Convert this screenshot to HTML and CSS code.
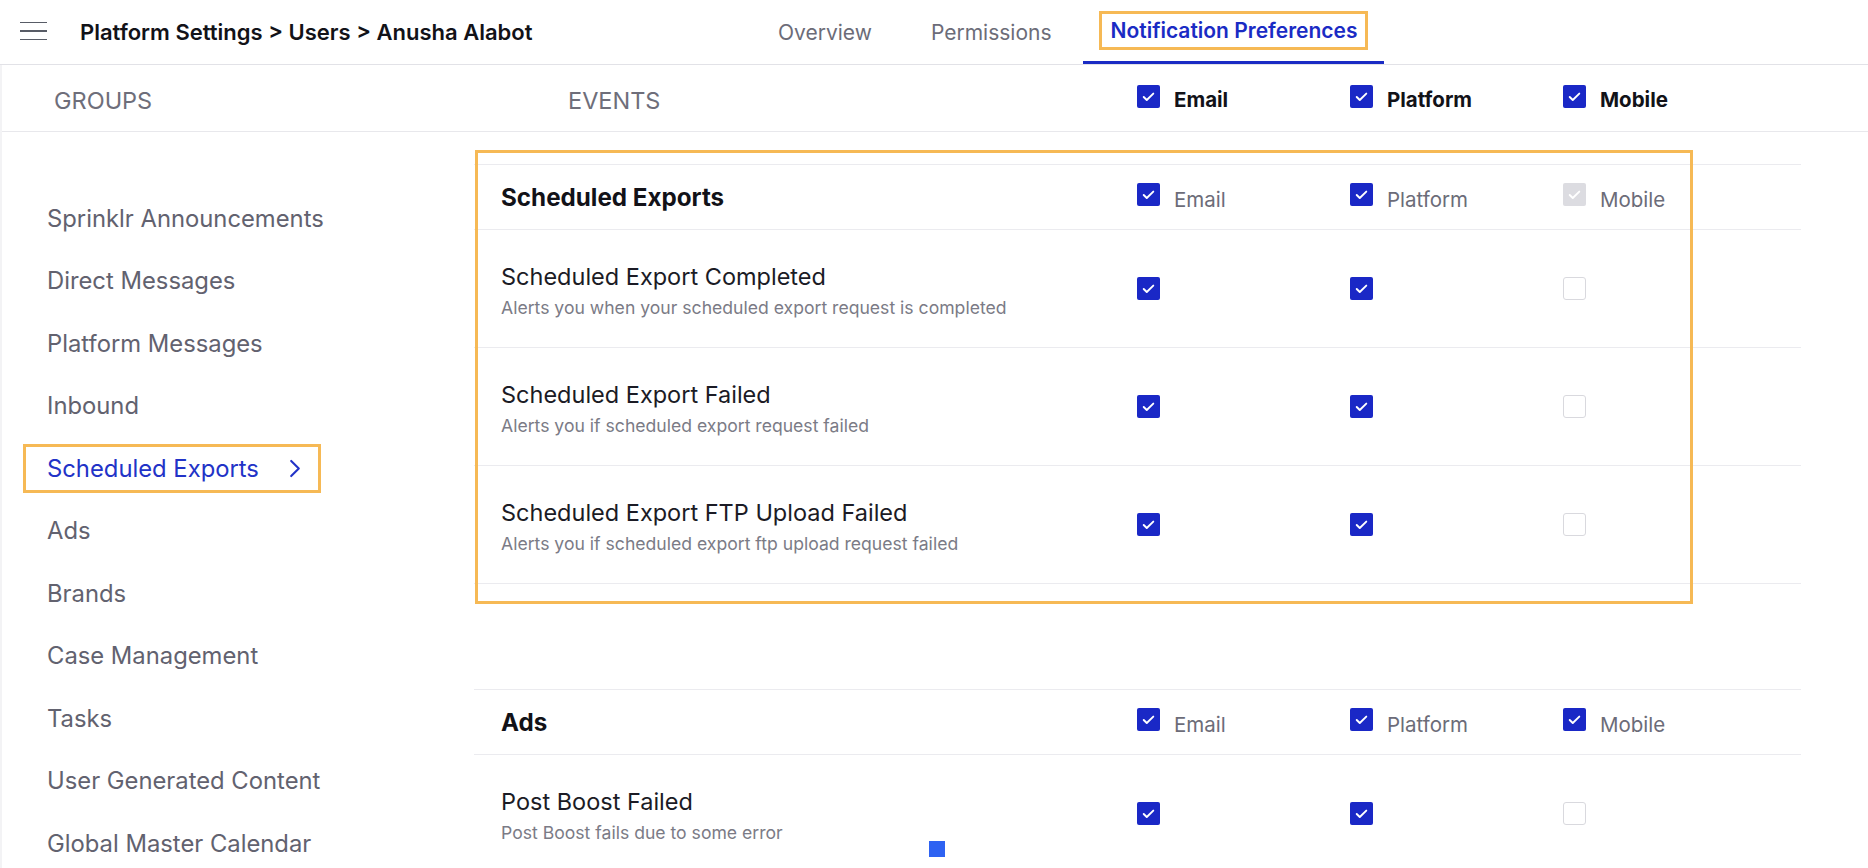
FILE: index.html
```html
<!DOCTYPE html>
<html lang="en">
<head>
<meta charset="utf-8">
<title>Notification Preferences</title>
<link rel="stylesheet" href="styles.css">
</head>
<body>
<header class="topbar">
  <div class="topbar-left">
    <div class="burger"><span></span><span></span><span></span></div>
    <div class="crumbs">Platform Settings &gt; Users &gt; Anusha Alabot</div>
  </div>
  <nav class="tabs">
    <div class="tab">Overview</div>
    <div class="tab">Permissions</div>
    <div class="tab active"><span class="tab-hl">Notification Preferences</span></div>
  </nav>
</header>

<div class="below">
  <div class="colhead">
    <div class="ch-groups">GROUPS</div>
    <div class="ch-events">EVENTS</div>
    <div class="ch-col"><span class="cb on"><svg viewBox="0 0 24 24"><path d="M7 12.5l3.2 3.2L17 9"/></svg></span><span class="lbl">Email</span></div>
    <div class="ch-col"><span class="cb on"><svg viewBox="0 0 24 24"><path d="M7 12.5l3.2 3.2L17 9"/></svg></span><span class="lbl">Platform</span></div>
    <div class="ch-col"><span class="cb on"><svg viewBox="0 0 24 24"><path d="M7 12.5l3.2 3.2L17 9"/></svg></span><span class="lbl">Mobile</span></div>
  </div>

  <div class="layout">
    <aside class="sidebar">
      <div class="item">Sprinklr Announcements</div>
      <div class="item">Direct Messages</div>
      <div class="item">Platform Messages</div>
      <div class="item">Inbound</div>
      <div class="item active"><div class="item-box"><span>Scheduled Exports</span><svg class="chev" viewBox="0 0 12 20"><path d="M2 2l8 8-8 8"/></svg></div></div>
      <div class="item">Ads</div>
      <div class="item">Brands</div>
      <div class="item">Case Management</div>
      <div class="item">Tasks</div>
      <div class="item">User Generated Content</div>
      <div class="item">Global Master Calendar</div>
    </aside>

    <main class="main">
      <section class="section">
        <div class="annot"></div>
        <div class="sec-head">
          <div class="sec-title">Scheduled Exports</div>
          <div class="sec-col"><span class="cb on"><svg viewBox="0 0 24 24"><path d="M7 12.5l3.2 3.2L17 9"/></svg></span><span class="lbl">Email</span></div>
          <div class="sec-col"><span class="cb on"><svg viewBox="0 0 24 24"><path d="M7 12.5l3.2 3.2L17 9"/></svg></span><span class="lbl">Platform</span></div>
          <div class="sec-col"><span class="cb dis"><svg viewBox="0 0 24 24"><path d="M7 12.5l3.2 3.2L17 9"/></svg></span><span class="lbl">Mobile</span></div>
        </div>
        <div class="row">
          <div class="ev"><div class="ev-title">Scheduled Export Completed</div><div class="ev-sub">Alerts you when your scheduled export request is completed</div></div>
          <div class="cell"><span class="cb on"><svg viewBox="0 0 24 24"><path d="M7 12.5l3.2 3.2L17 9"/></svg></span></div>
          <div class="cell"><span class="cb on"><svg viewBox="0 0 24 24"><path d="M7 12.5l3.2 3.2L17 9"/></svg></span></div>
          <div class="cell"><span class="cb off"></span></div>
        </div>
        <div class="row">
          <div class="ev"><div class="ev-title">Scheduled Export Failed</div><div class="ev-sub">Alerts you if scheduled export request failed</div></div>
          <div class="cell"><span class="cb on"><svg viewBox="0 0 24 24"><path d="M7 12.5l3.2 3.2L17 9"/></svg></span></div>
          <div class="cell"><span class="cb on"><svg viewBox="0 0 24 24"><path d="M7 12.5l3.2 3.2L17 9"/></svg></span></div>
          <div class="cell"><span class="cb off"></span></div>
        </div>
        <div class="row">
          <div class="ev"><div class="ev-title">Scheduled Export FTP Upload Failed</div><div class="ev-sub">Alerts you if scheduled export ftp upload request failed</div></div>
          <div class="cell"><span class="cb on"><svg viewBox="0 0 24 24"><path d="M7 12.5l3.2 3.2L17 9"/></svg></span></div>
          <div class="cell"><span class="cb on"><svg viewBox="0 0 24 24"><path d="M7 12.5l3.2 3.2L17 9"/></svg></span></div>
          <div class="cell"><span class="cb off"></span></div>
        </div>
      </section>

      <section class="section second">
        <div class="sec-head">
          <div class="sec-title">Ads</div>
          <div class="sec-col"><span class="cb on"><svg viewBox="0 0 24 24"><path d="M7 12.5l3.2 3.2L17 9"/></svg></span><span class="lbl">Email</span></div>
          <div class="sec-col"><span class="cb on"><svg viewBox="0 0 24 24"><path d="M7 12.5l3.2 3.2L17 9"/></svg></span><span class="lbl">Platform</span></div>
          <div class="sec-col"><span class="cb on"><svg viewBox="0 0 24 24"><path d="M7 12.5l3.2 3.2L17 9"/></svg></span><span class="lbl">Mobile</span></div>
        </div>
        <div class="row">
          <div class="ev"><div class="ev-title">Post Boost Failed</div><div class="ev-sub">Post Boost fails due to some error</div></div>
          <div class="cell"><span class="cb on"><svg viewBox="0 0 24 24"><path d="M7 12.5l3.2 3.2L17 9"/></svg></span></div>
          <div class="cell"><span class="cb on"><svg viewBox="0 0 24 24"><path d="M7 12.5l3.2 3.2L17 9"/></svg></span></div>
          <div class="cell"><span class="cb off"></span></div>
        </div>
      </section>
    </main>
  </div>
</div>
<div class="cursor-dot"></div>
</body>
</html>
```

FILE: styles.css
```css
html, body {
  margin: 0;
  padding: 0;
  background: #ffffff;
  font-family: Inter, "Noto Sans", "Liberation Sans", sans-serif;
  color: #1b1b25;
  overflow: hidden;
  height: 868px;
}

.topbar {
  display: flex;
  align-items: stretch;
  height: 64px;
  border-bottom: 1px solid #e2e2e7;
}

.topbar-left {
  width: 751px;
  flex: none;
  display: flex;
  align-items: center;
  padding-left: 20px;
  box-sizing: border-box;
}

.burger {
  width: 27px;
  display: flex;
  flex-direction: column;
  gap: 7px;
  margin-top: -2px;
}
.burger span {
  display: block;
  height: 1.6px;
  background: #585c66;
}

.crumbs {
  margin-left: 33px;
  font-size: 22px;
  font-weight: 600;
  color: #121218;
}

.tabs {
  display: flex;
  gap: 5px;
}
.tab {
  display: flex;
  align-items: center;
  padding: 0 27px;
  font-size: 21px;
  color: #6c6c78;
  box-sizing: border-box;
  height: 64px;
  border-bottom: 3px solid transparent;
  padding-top: 3px;
}
.tab.active {
  padding: 3px 16px 0;
  border-bottom-color: #1a2bc4;
  color: #1a2bc4;
  font-weight: 600;
}
.tab-hl {
  border: 3px solid #f6b955;
  padding: 4px 8px;
  margin-top: -3px;
}

.below {
  border-left: 2px solid #f3f3f5;
}

.colhead {
  display: grid;
  grid-template-columns: 472px 663px 213px 213px 1fr;
  align-items: center;
  height: 66px;
  border-bottom: 1px solid #e8e8ec;
}
.ch-groups {
  padding-left: 52px;
  padding-top: 4px;
  font-size: 23.5px;
  color: #6e6e7a;
}
.ch-events {
  padding-left: 94px;
  padding-top: 4px;
  font-size: 23.5px;
  color: #6e6e7a;
}
.ch-col {
  display: flex;
  align-items: flex-start;
  gap: 14px;
  font-size: 20.5px;
  font-weight: 700;
  color: #121218;
}
.ch-col .lbl {
  line-height: 24px;
  margin-top: 3px;
}

.cb {
  display: inline-flex;
  width: 23px;
  height: 23px;
  box-sizing: border-box;
  border-radius: 2px;
  flex: none;
}
.cb svg {
  width: 23px;
  height: 23px;
}
.cb svg path {
  fill: none;
  stroke: #ffffff;
  stroke-width: 2;
  stroke-linecap: round;
  stroke-linejoin: round;
}
.cb.on {
  background: #1a28c6;
}
.cb.dis {
  background: #dcdce1;
}
.cb.off {
  background: #ffffff;
  border: 1.5px solid #d9d9de;
  border-radius: 3px;
}

.layout {
  display: flex;
}

.sidebar {
  width: 472px;
  flex: none;
  padding-top: 55px;
}
.item {
  height: 62.5px;
  display: flex;
  align-items: center;
  padding-left: 45px;
  font-size: 23.8px;
  color: #62626f;
}
.item.active {
  padding-left: 21px;
}
.item-box {
  width: 298px;
  height: 49px;
  box-sizing: border-box;
  border: 3px solid #f6b955;
  display: flex;
  align-items: center;
  justify-content: space-between;
  padding: 0 17px 0 21px;
  color: #2233c7;
}
.chev {
  width: 12px;
  height: 19px;
}
.chev path {
  fill: none;
  stroke: #2233c7;
  stroke-width: 2.2;
  stroke-linecap: round;
  stroke-linejoin: round;
}

.main {
  width: 1327px;
  flex: none;
  padding-top: 32px;
}

.section {
  position: relative;
  border-top: 1px solid #ebebef;
}
.section.second {
  margin-top: 105px;
}
.annot {
  position: absolute;
  left: 1px;
  top: -15px;
  width: 1218px;
  height: 454px;
  box-sizing: border-box;
  border: 3px solid #f6b955;
  pointer-events: none;
}

.sec-head,
.row {
  display: grid;
  grid-template-columns: 663px 213px 213px 1fr;
  align-items: center;
  border-bottom: 1px solid #ebebef;
}
.sec-head {
  height: 64px;
}
.row {
  height: 117px;
}
.sec-title {
  padding-left: 27px;
  font-size: 24.2px;
  font-weight: 700;
  color: #121218;
}
.sec-col {
  display: flex;
  align-items: flex-start;
  gap: 14px;
  font-size: 20.5px;
  color: #6c6c78;
}
.sec-col .lbl {
  line-height: 24px;
  margin-top: 5px;
}

.ev {
  padding-left: 27px;
  padding-top: 4px;
}
.ev-title {
  font-size: 23.5px;
  line-height: 32px;
  color: #1b1b25;
  margin-bottom: 2px;
}
.ev-sub {
  font-size: 17.6px;
  line-height: 26px;
  color: #7b7b86;
}
.cell {
  display: flex;
  align-items: center;
}

.cursor-dot {
  position: absolute;
  left: 929px;
  top: 841px;
  width: 16px;
  height: 16px;
  background: #2e62f2;
}
```
